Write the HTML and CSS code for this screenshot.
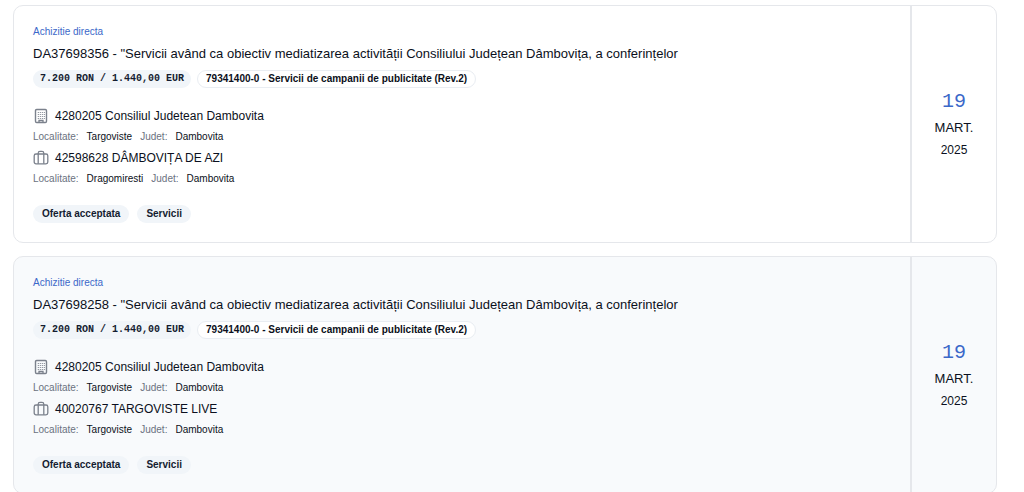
FILE: index.html
```
<!DOCTYPE html>
<html lang="ro">
<head>
<meta charset="utf-8">
<meta name="viewport" content="width=device-width, initial-scale=1">
<title>Achizitii directe</title>
<link rel="stylesheet" href="styles.css">
</head>
<body>
<svg class="sprite" aria-hidden="true">
  <symbol id="building" viewBox="0 0 16 16">
    <rect x="2.5" y="1.5" width="11" height="13" rx="1.2" fill="none" stroke="currentColor" stroke-width="1.4"/>
    <path d="M6 14.5v-2h4v2" fill="none" stroke="currentColor" stroke-width="1.3"/>
    <path d="M4.8 4.5h7M4.8 6.5h7M4.8 8.5h7M4.8 10.5h7" fill="none" stroke="currentColor" stroke-width="1" stroke-dasharray="1 1"/>
  </symbol>
  <symbol id="luggage" viewBox="0 0 16 16">
    <rect x="1.2" y="4" width="13.6" height="9.8" rx="1.8" fill="none" stroke="currentColor" stroke-width="1.3"/>
    <path d="M5.2 13.8V3.2Q5.2 1.4 7 1.4h2Q10.8 1.4 10.8 3.2v10.6" fill="none" stroke="currentColor" stroke-width="1.3"/>
  </symbol>
</svg>
<main class="list">
  <article class="card">
    <div class="details">
      <p class="type">Achizitie directa</p>
      <h2 class="title">DA37698356 - "Servicii având ca obiectiv mediatizarea activității Consiliului Județean Dâmbovița, a conferințelor</h2>
      <div class="badges">
        <span class="badge price">7.200 RON / 1.440,00 EUR</span>
        <span class="badge outline">79341400-0 - Servicii de campanii de publicitate (Rev.2)</span>
      </div>
      <div class="parties">
        <p class="party"><svg class="icon" aria-hidden="true"><use href="#building"/></svg>4280205 Consiliul Judetean Dambovita</p>
        <p class="place"><span>Localitate:</span><b>Targoviste</b><span>Judet:</span><b>Dambovita</b></p>
        <p class="party"><svg class="icon" aria-hidden="true"><use href="#luggage"/></svg>42598628 DÂMBOVIȚA DE AZI</p>
        <p class="place"><span>Localitate:</span><b>Dragomiresti</b><span>Judet:</span><b>Dambovita</b></p>
      </div>
      <div class="badges status">
        <span class="badge">Oferta acceptata</span>
        <span class="badge">Servicii</span>
      </div>
    </div>
    <time class="date" datetime="2025-03-19"><span class="day">19</span><span class="month">MART.</span><span class="year">2025</span></time>
  </article>
  <article class="card">
    <div class="details">
      <p class="type">Achizitie directa</p>
      <h2 class="title">DA37698258 - "Servicii având ca obiectiv mediatizarea activității Consiliului Județean Dâmbovița, a conferințelor</h2>
      <div class="badges">
        <span class="badge price">7.200 RON / 1.440,00 EUR</span>
        <span class="badge outline">79341400-0 - Servicii de campanii de publicitate (Rev.2)</span>
      </div>
      <div class="parties">
        <p class="party"><svg class="icon" aria-hidden="true"><use href="#building"/></svg>4280205 Consiliul Judetean Dambovita</p>
        <p class="place"><span>Localitate:</span><b>Targoviste</b><span>Judet:</span><b>Dambovita</b></p>
        <p class="party"><svg class="icon" aria-hidden="true"><use href="#luggage"/></svg>40020767 TARGOVISTE LIVE</p>
        <p class="place"><span>Localitate:</span><b>Targoviste</b><span>Judet:</span><b>Dambovita</b></p>
      </div>
      <div class="badges status">
        <span class="badge">Oferta acceptata</span>
        <span class="badge">Servicii</span>
      </div>
    </div>
    <time class="date" datetime="2025-03-19"><span class="day">19</span><span class="month">MART.</span><span class="year">2025</span></time>
  </article>
</main>
</body>
</html>
```
FILE: styles.css
```
* { box-sizing: border-box; }
body {
  margin: 0;
  background: #fff;
  color: #0b1020;
  font-family: "Liberation Sans", Arial, sans-serif;
}
p, h2 { margin: 0; }
.sprite { display: none; }
.list {
  display: flex;
  flex-direction: column;
  gap: 13px;
  padding: 5px 27px 5px 13px;
}
.card {
  display: flex;
  border: 1px solid #e5e7eb;
  border-radius: 10px;
  background: #fff;
}
.card:nth-child(even) { background: #f8fafc; }
.details {
  flex: 1;
  min-width: 0;
  padding: 17px 19px 19px;
}
.type {
  color: #3b68c9;
  font-size: 10px;
  line-height: 18px;
}
.title {
  margin-top: 1px;
  font-size: 13px;
  font-weight: 400;
  line-height: 24px;
}
.badges {
  display: flex;
  flex-wrap: wrap;
  gap: 6px;
  margin-top: 4px;
}
.badge {
  padding: 0 8px;
  border: 1px solid transparent;
  border-radius: 9px;
  background: #f1f5f9;
  color: #141c30;
  font-size: 10px;
  font-weight: 700;
  line-height: 16px;
}
.price {
  padding: 0 6px;
  font-family: "Liberation Mono", monospace;
}
.outline {
  border-color: #e9edf2;
  background: #fff;
  color: #0b1020;
}
.parties { margin-top: 18px; }
.party {
  display: flex;
  align-items: center;
  gap: 6px;
  font-size: 12px;
  line-height: 20px;
}
.icon {
  width: 16px;
  height: 16px;
  color: #7b818c;
}
.place {
  display: flex;
  gap: 8px;
  font-size: 10px;
  line-height: 22px;
}
.place span { color: #6b7280; }
.place b { font-weight: 400; }
.status {
  gap: 8px;
  margin-top: 15px;
}
.date {
  display: flex;
  flex: 0 0 86px;
  flex-direction: column;
  align-items: center;
  justify-content: center;
  border-left: 2px solid #e5e7eb;
}
.day {
  color: #3b68c9;
  font-family: "Liberation Mono", monospace;
  font-size: 20px;
  line-height: 28px;
}
.month {
  font-size: 13px;
  line-height: 24px;
}
.year {
  font-size: 12px;
  line-height: 20px;
}
```
